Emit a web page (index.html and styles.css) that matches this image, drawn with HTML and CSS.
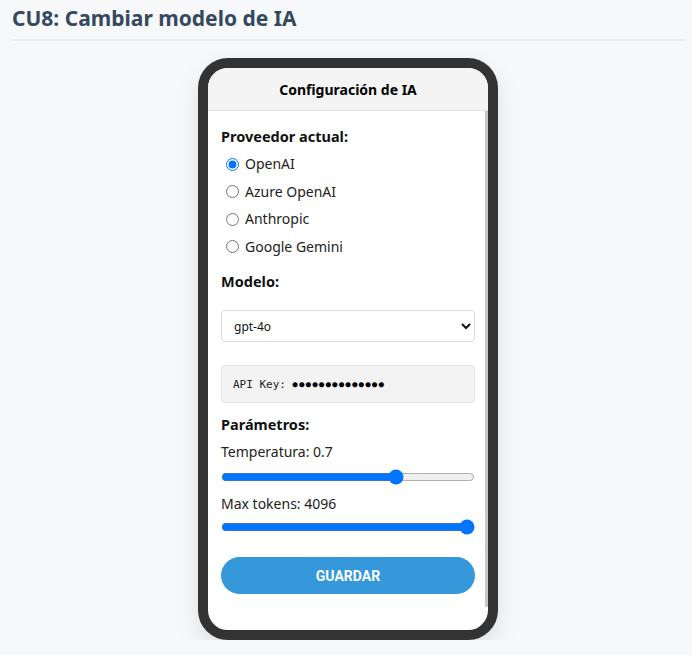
FILE: index.html
```html
<!DOCTYPE html>
<html lang="es">
<head>
<meta charset="utf-8">
<title>CU8</title>
<link rel="stylesheet" href="styles.css">
</head>
<body>
<h1 class="title">CU8: Cambiar modelo de IA</h1>
<div class="stage">
  <div class="phone">
    <div class="screen">
      <div class="screen-header">Configuración de IA</div>
      <div class="screen-body">
        <div class="section-label">Proveedor actual:</div>
        <div class="radios">
          <label class="radio"><input type="radio" name="p" checked><span>OpenAI</span></label>
          <label class="radio"><input type="radio" name="p"><span>Azure OpenAI</span></label>
          <label class="radio"><input type="radio" name="p"><span>Anthropic</span></label>
          <label class="radio"><input type="radio" name="p"><span>Google Gemini</span></label>
        </div>
        <div class="section-label model-label">Modelo:</div>
        <select class="select"><option>gpt-4o</option></select>
        <div class="apikey">API Key: <span class="dots">●●●●●●●●●●●●●●</span></div>
        <div class="section-label params-label">Parámetros:</div>
        <div class="param">Temperatura: 0.7</div>
        <input class="range" type="range" min="0" max="1" step="0.1" value="0.7">
        <div class="param param-2">Max tokens: 4096</div>
        <input class="range range-2" type="range" min="0" max="4096" value="4096">
        <button class="save">GUARDAR</button>
      </div>
      <div class="scroll-thumb"></div>
    </div>
  </div>
</div>
</body>
</html>
```
FILE: styles.css
```css
html, body { margin: 0; padding: 0; }
body {
  background: #f7f8fa;
  font-family: "Noto Sans", "Open Sans", sans-serif;
  color: #111;
  padding: 0 8px 0 12px;
}
.title {
  margin: 0;
  padding: 4px 0 7px;
  font-size: 21px;
  font-weight: 700;
  color: #34495e;
  border-bottom: 2px solid #eaecef;
  line-height: 28px;
}
.stage {
  display: flex;
  justify-content: center;
  padding-top: 17px;
}
.phone {
  width: 280px;
  height: 562px;
  border: 10px solid #333;
  border-radius: 30px;
  background: #fff;
  box-shadow: 0 10px 25px rgba(0,0,0,0.1);
  overflow: hidden;
}
.screen { position: relative; height: 100%; }
.screen-header {
  height: 42px;
  background: #f4f4f4;
  border-bottom: 1px solid #e2e2e2;
  display: flex;
  align-items: center;
  justify-content: center;
  font-size: 14px;
  font-weight: 700;
  color: #000;
}
.screen-body {
  padding: 15px 13px 0 13px;
  display: flex;
  flex-direction: column;
}
.section-label {
  font-size: 14.5px;
  font-weight: 700;
  line-height: 20px;
  color: #111;
}
.radios { display: flex; flex-direction: column; gap: 7.5px; margin-top: 8px; }
.radio {
  display: flex;
  align-items: center;
  font-size: 14px;
  line-height: 20px;
  color: #222;
}
.radio input { margin: 0 6px 0 5px; width: 13px; height: 13px; }
.model-label { margin-top: 14.5px; }
.select {
  margin-top: 19px;
  height: 32px;
  border: 1px solid #ddd;
  border-radius: 4px;
  background: #fff;
  font-family: "Noto Sans", sans-serif;
  font-size: 12px;
  color: #111;
  padding: 0 6px 0 8px;
}
.apikey {
  margin-top: 23px;
  height: 38px;
  box-sizing: border-box;
  border: 1px solid #e3e3e3;
  border-radius: 4px;
  background: #f3f3f3;
  font-family: "DejaVu Sans Mono", "Liberation Mono", monospace;
  font-size: 11px;
  color: #222;
  display: flex;
  align-items: center;
  padding-left: 11px;
  white-space: pre;
}
.dots {
  font-family: "DejaVu Sans Mono", monospace;
  font-size: 8.5px;
  letter-spacing: 1.5px;
  color: #000;
}
.params-label { margin-top: 11px; }
.param { font-size: 14px; line-height: 20px; margin-top: 8px; color: #222; }
.param-2 { margin-top: 9px; }
.range { margin: 7px 0 0; width: 100%; accent-color: #0075ff; }
.range-2 { margin-top: 5px; }
.save {
  margin-top: 22px;
  height: 37px;
  border: none;
  border-radius: 19px;
  background: #3498db;
  color: #fff;
  font-family: "Roboto", sans-serif;
  font-weight: 700;
  font-size: 14px;
}
.scroll-thumb {
  position: absolute;
  right: 0;
  top: 43px;
  width: 3px;
  height: 496px;
  background: #c6c6c6;
}
```
